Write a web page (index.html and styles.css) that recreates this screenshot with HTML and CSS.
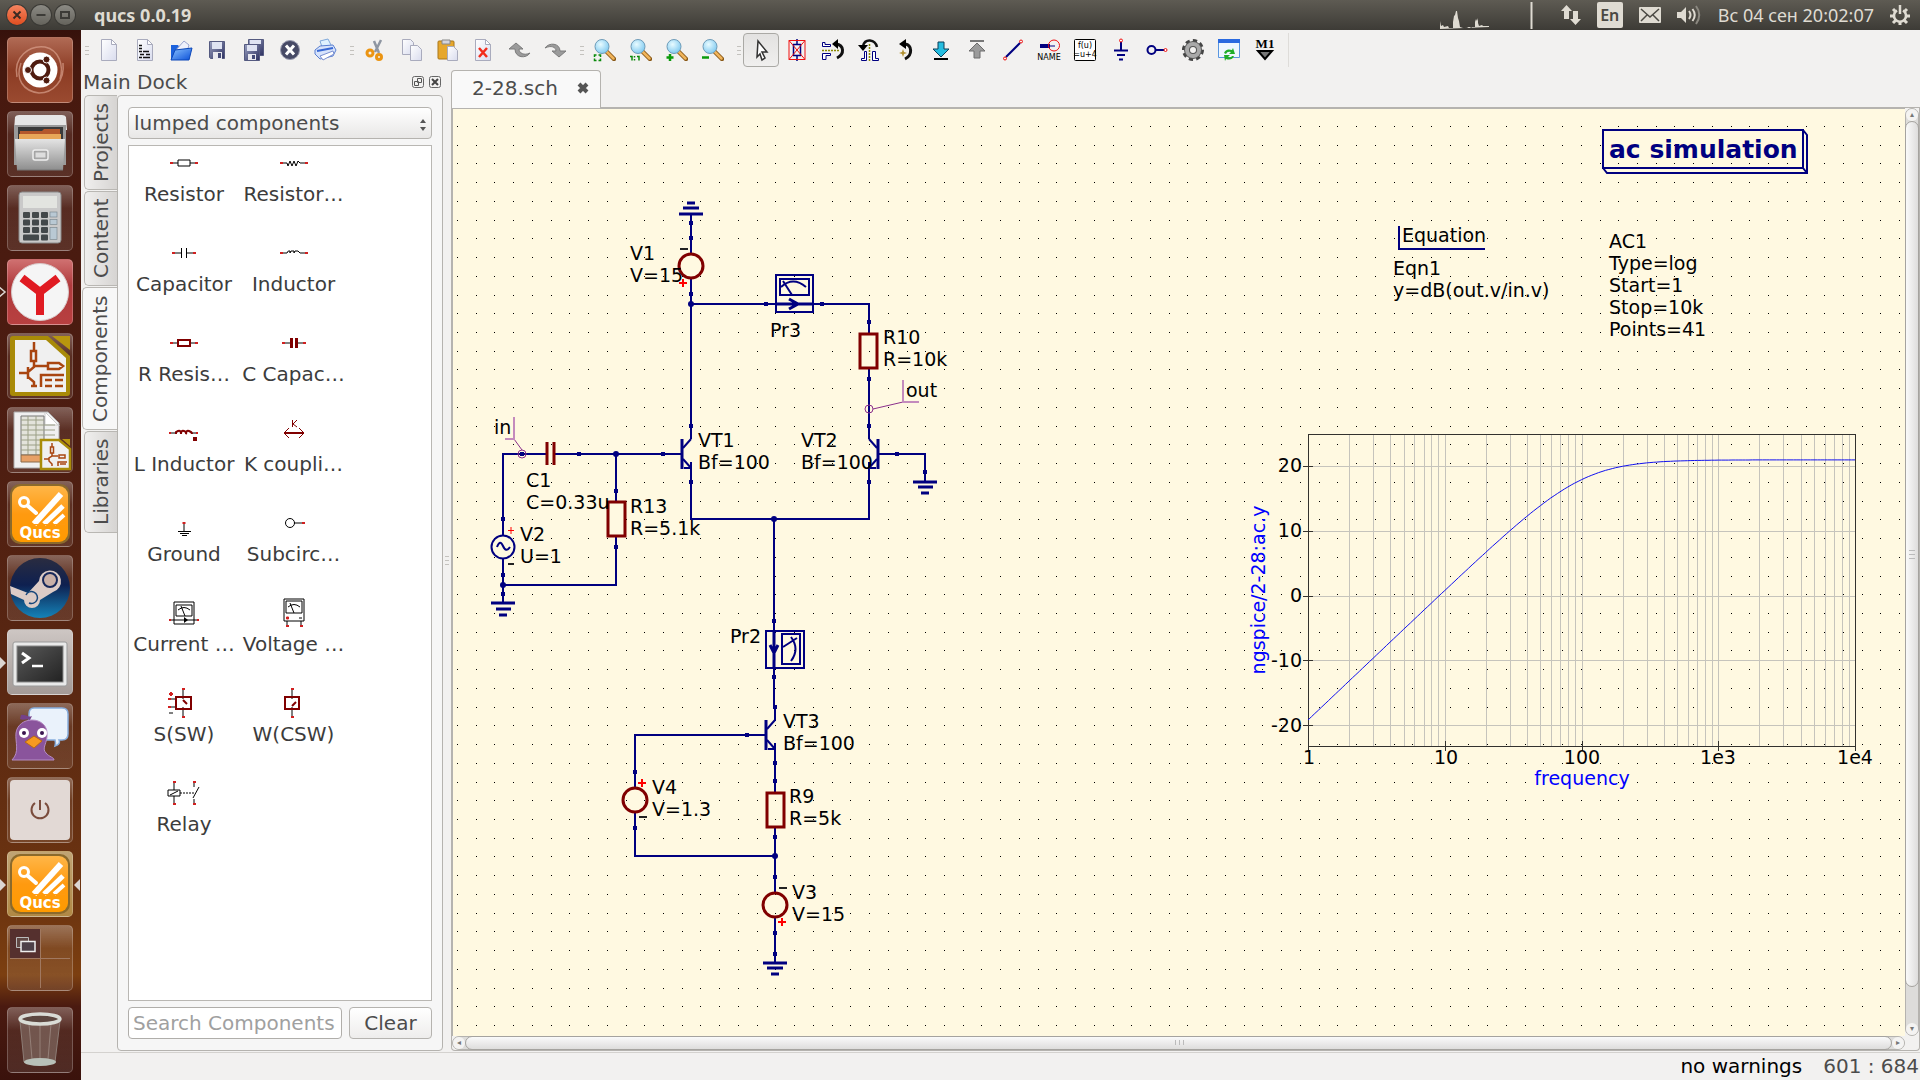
FILE: index.html
```html
<!DOCTYPE html>
<html lang="en">
<head>
<meta charset="utf-8">
<title>qucs 0.0.19</title>
<link rel="stylesheet" href="styles.css">
</head>
<body>
<svg class="defs" aria-hidden="true">
  <defs>
    <linearGradient id="gPaper" x1="0" y1="0" x2="1" y2="1"><stop offset="0" stop-color="#fff"/><stop offset="1" stop-color="#d9dcee"/></linearGradient>
    <linearGradient id="gNavy" x1="0" y1="0" x2="1" y2="1"><stop offset="0" stop-color="#9aa0c0"/><stop offset="1" stop-color="#2c3060"/></linearGradient>
    <linearGradient id="gBlue" x1="0" y1="0" x2="1" y2="1"><stop offset="0" stop-color="#8cc4ff"/><stop offset="1" stop-color="#0a4fd8"/></linearGradient>
    <linearGradient id="gGrey" x1="0" y1="0" x2="0" y2="1"><stop offset="0" stop-color="#e4e4e4"/><stop offset="1" stop-color="#8e8e8e"/></linearGradient>
    <linearGradient id="gDark" x1="0" y1="0" x2="1" y2="1"><stop offset="0" stop-color="#5a5a5a"/><stop offset="1" stop-color="#222"/></linearGradient>
    <linearGradient id="gSteam" x1="0" y1="0" x2="0" y2="1"><stop offset="0" stop-color="#2a2c40"/><stop offset=".45" stop-color="#0e2050"/><stop offset="1" stop-color="#1583b8"/></linearGradient>
    <linearGradient id="gOrange" x1="0" y1="0" x2="0" y2="1"><stop offset="0" stop-color="#ffb648"/><stop offset=".5" stop-color="#ff9a10"/><stop offset="1" stop-color="#ff9a00"/></linearGradient>
    <radialGradient id="gLens" cx=".4" cy=".35" r=".7"><stop offset="0" stop-color="#e8fbff"/><stop offset="1" stop-color="#7cc8f0"/></radialGradient>
    <symbol id="sheet" viewBox="0 0 22 22"><path d="M3.500.5h10l5 5v16h-15z" fill="url(#gPaper)" stroke="#a9abbd"/><path d="M13.500.5v5h5z" fill="#fff" stroke="#a9abbd"/></symbol>
    <symbol id="lens" viewBox="0 0 22 22"><path d="M12 12l8 8" stroke="#8a5a18" stroke-width="4.500" stroke-linecap="round"/><path d="M12.500 12.500l7 7" stroke="#f0b45a" stroke-width="2.500" stroke-linecap="round"/><circle cx="8" cy="7.500" r="7" fill="url(#gLens)" stroke="#6f9cb8"/></symbol>
    <symbol id="qucsLogo" viewBox="0 0 66 66">
      <rect x="3" y="3" width="60" height="60" rx="10" fill="#8b6a2c"/>
      <rect x="5" y="5" width="56" height="56" rx="9" fill="url(#gOrange)"/>
      <g stroke="#fff" fill="none"><circle cx="17" cy="21" r="4.500" stroke-width="3"/><path d="M21 25l8 7" stroke-width="4" stroke-linecap="round"/><path d="M27 43L54 13" stroke-width="6"/><path d="M37 43L56 25" stroke-width="5"/><path d="M47 43l10-9" stroke-width="4"/></g>
      <path d="M24 43.500h34" stroke="#ff9a10" stroke-width="1"/>
      <text x="33" y="57" text-anchor="middle" class="qucs-word">Qucs</text>
    </symbol>
    <symbol id="npn" overflow="visible"><path d="M-9 -15v30" stroke-width="3"/><path d="M-8 -6l8 -9M-8 5l8 9M0 8v6h-7" /></symbol>
  </defs>
</svg>

<header class="panel">
  <div class="window-buttons">
    <button class="wb wb-close" aria-label="Close"><svg viewBox="0 0 20 20"><path d="M6.500 6.500l7 7M13.500 6.500l-7 7" stroke="#3c2a22" stroke-width="2"/></svg></button>
    <button class="wb" aria-label="Minimize"><svg viewBox="0 0 20 20"><path d="M5.500 10h9" stroke="#3c3b37" stroke-width="2"/></svg></button>
    <button class="wb" aria-label="Maximize"><svg viewBox="0 0 20 20"><path d="M6 7h8v6H6z" stroke="#3c3b37" stroke-width="2" fill="none"/></svg></button>
  </div>
  <h1 class="panel-title">qucs 0.0.19</h1>
  <div class="indicators">
    <svg class="cpu" viewBox="0 0 94 30"><path d="M1 29V21l1 5 2-1 1 2 4-1 1 2h4v-6l1-6 1-1 1-4h1l1 7 1 3 1 6 3 1h4l2-1 2 1 1-1h3v-5l1-3 1 2 1-3v5l1 3 3-1 1 1h6v1z" fill="#dfdbd2"/><path d="M92.500 2v27" stroke="#dfdbd2" stroke-width="2"/></svg>
    <svg class="ind-20" viewBox="0 0 20 20"><path d="M5.500 0L11 6H8v8H3V6H0zM14.500 20L9 14h3V6h5v8h3z" fill="#dfdbd2"/></svg>
    <span class="lang">En</span>
    <svg class="ind-mail" viewBox="0 0 22 16"><rect width="22" height="16" rx="1" fill="#dfdbd2"/><path d="M2 2l9 8 9-8M2 14l6-6M20 14l-6-6" fill="none" stroke="#4a4842" stroke-width="1.500"/></svg>
    <svg class="ind-vol" viewBox="0 0 25 20"><path d="M0 7h4l5-5v16l-5-5H0z" fill="#dfdbd2"/><path d="M12 6q3 4 0 8M15.500 4q4.500 6 0 12" fill="none" stroke="#dfdbd2" stroke-width="2"/><path d="M19 1q6.500 9 0 18" fill="none" stroke="#8b8880" stroke-width="2"/></svg>
    <time class="clock">Вс 04 сен 20:02:07</time>
    <svg class="ind-20" viewBox="0 0 20 20"><g stroke="#dfdbd2" fill="none"><path d="M7 5.500a6 6 0 1 0 6 0" stroke-width="2.500"/><path d="M10 0v9" stroke-width="2.500"/><path d="M0 11h4M16 11h4M3 4l3 3M17 4l-3 3M3 18l3-3M17 18l-3-3M10 17v3" stroke-width="3"/></g></svg>
  </div>
</header>

<div class="desktop">
  <nav class="launcher" aria-label="Launcher">
    <button class="tile tile-dash" aria-label="Dash"><svg viewBox="0 0 66 66"><path d="M10 40C6 20 22 8 38 10c14 3 19 18 15 32M56 26c2 18-10 30-24 30C16 54 8 42 14 26" fill="none" stroke="#d9a08c" stroke-opacity=".7" stroke-width="1.500"/><circle cx="33" cy="33" r="17.500" fill="#fff"/><circle cx="33" cy="33" r="8.500" fill="none" stroke="#4f1c10" stroke-width="4"/><g fill="#4f1c10" stroke="#fff"><circle cx="21" cy="33" r="3.500"/><circle cx="39.500" cy="22.500" r="3.500"/><circle cx="39.500" cy="43.500" r="3.500"/></g></svg></button>
    <button class="tile" aria-label="Files"><svg viewBox="0 0 66 66"><path d="M8 6q1-2 4-2h43q3 0 4 2l1 13H7z" fill="#e6e6e6"/><path d="M7 14h52v40H7z" fill="#9a9a9a"/><path d="M11 16h45v13H11z" fill="#3a3a3a"/><path d="M13 20h22l2-2h16v9H13z" fill="#b4582c"/><path d="M12 23h42v5H12z" fill="#e8a658"/><path d="M8 28h50l-2 31H10z" fill="url(#gGrey)"/><path d="M10 59h46" stroke="#777"/><rect x="26" y="39" width="15" height="10" rx="2" fill="#a5a5a5" stroke="#eee" stroke-width="1.500"/><rect x="28.500" y="41.500" width="10" height="5" fill="#ddd"/></svg></button>
    <button class="tile" aria-label="Calculator"><svg viewBox="0 0 66 66"><rect x="12" y="7" width="42" height="51" rx="3" fill="#c9c9c9" stroke="#8a8a8a"/><rect x="16" y="11" width="34" height="12" fill="#e2e4e0"/><g fill="#43484a"><rect x="16" y="27" width="7" height="6" rx="1"/><rect x="25" y="27" width="7" height="6" rx="1"/><rect x="34" y="27" width="7" height="6" rx="1"/><rect x="16" y="34.500" width="7" height="6" rx="1"/><rect x="25" y="34.500" width="7" height="6" rx="1"/><rect x="34" y="34.500" width="7" height="6" rx="1"/><rect x="16" y="42" width="7" height="6" rx="1"/><rect x="25" y="42" width="7" height="6" rx="1"/><rect x="34" y="42" width="7" height="6" rx="1"/><rect x="16" y="49.500" width="16" height="6" rx="1"/><rect x="34" y="49.500" width="7" height="6" rx="1"/></g><g fill="#b9c9d4" stroke="#7e8a92" stroke-width=".7"><rect x="43" y="27" width="7" height="5"/><rect x="43" y="34.500" width="7" height="5"/><rect x="43" y="42.500" width="7" height="12"/></g></svg></button>
    <button class="tile tile-yandex" aria-label="Yandex Browser"><svg viewBox="0 0 66 66"><circle cx="33" cy="33" r="28.500" fill="#f5f5f5" stroke="#d8c8c8"/><path d="M15 19l18 14 18-14" fill="none" stroke="#e01b22" stroke-width="8"/><path d="M33 31v25" stroke="#e01b22" stroke-width="8"/><path d="M-8 28l6 5-6 5" fill="none" stroke="#dcd6d2" stroke-width="1.500"/></svg></button>
    <button class="tile" aria-label="Schematic editor"><svg viewBox="0 0 66 66"><path d="M3 6q0-3 3-3h35l22 20v37q0 3-3 3H6q-3 0-3-3z" fill="#a88a08"/><path d="M45 3h18v14z" fill="#b8960e"/><path d="M8 7h31l20 18v34H8z" fill="#f0f0f0"/><g stroke="#a94510" fill="none" stroke-width="2.500"><path d="M27 9v9M27 28v6l-6 5v5l6 5v3M12 40h9M21 34v12M27 33h14M24 53h6"/><path d="M24 18h5v10h-5z"/><path d="M41 30h11l4 3-4 3H41z"/><path d="M34 54V42h23M38 47h7M48 47h8M38 53h7M48 53h8"/></g></svg></button>
    <button class="tile" aria-label="Bill of materials"><svg viewBox="0 0 66 66"><path d="M7 5h34l11 11v45H7z" fill="#f0f0f0" stroke="#aaa"/><path d="M38 5l14 14V18H38z" fill="#fff" stroke="#ccc"/><path d="M14 9h23v39H14z" fill="#e3e3db" stroke="#777"/><path d="M14 13h23M14 18h34M14 23h34M14 28h34M14 33h34M14 38h34M14 43h34M21 9v39M29 9v39" stroke="#9b9f86"/><path d="M14 48h20v7H14z" fill="#e7a066" stroke="#8a6a4a"/><path d="M34 33h18l11 9v20H34z" fill="#f0f0f0" stroke="#a98c08" stroke-width="2.500"/><path d="M55 32h8v7z" fill="#b8960e"/><g stroke="#a94510" fill="none" stroke-width="1.500"><path d="M45 36v4M45 46v3l-3 2v3l3 3v2M37 52h5M45 49h6M52 48h6v3h-6zM51 59v-4h9M53 57h6M43.500 40h3v6h-3z"/></g></svg></button>
    <button class="tile" aria-label="Qucs"><svg viewBox="0 0 66 66"><use href="#qucsLogo"/></svg></button>
    <button class="tile" aria-label="Steam"><svg viewBox="0 0 66 66"><circle cx="33" cy="33" r="30" fill="url(#gSteam)"/><path d="M3 31l18 7 11-12a11 11 0 1 1 14 11L33 45a8 8 0 0 1-16 0L4 39z" fill="#dccbc6"/><circle cx="43" cy="25" r="7" fill="#c9b0a8" stroke="#17285a" stroke-width="2"/><path d="M19 40a6 6 0 1 1 3 8" fill="none" stroke="#17457a" stroke-width="1.500"/></svg></button>
    <button class="tile tile-light running" aria-label="Terminal"><svg viewBox="0 0 66 66"><rect x="6" y="13" width="54" height="44" rx="2" fill="#e9e9e9" stroke="#999"/><rect x="10" y="17" width="46" height="36" fill="url(#gDark)" stroke="#888"/><path d="M15 24l7 5-7 5" fill="none" stroke="#fff" stroke-width="3"/><path d="M25 37h11" stroke="#fff" stroke-width="2.500"/></svg></button>
    <button class="tile" aria-label="Pidgin"><svg viewBox="0 0 66 66"><path d="M27 5h28q6 0 6 6v20q0 6-6 6h-3q2 4-4 6 1-3 0-6H28q-6 0-6-6V11q0-6 5-6z" fill="#eaf2fb" stroke="#88aede" stroke-width="1.500"/><path d="M5 57c8-8 3-18 4-27 1-8 8-13 16-13 9 0 15 6 15 13 1 10-6 15-1 20 3 4 8 4 8 7z" fill="#8a549c" stroke="#b58cc4"/><path d="M13 16c4 2 6-1 10 1l2-4c-4 2-7-2-11-1z" fill="#75428a"/><circle cx="17" cy="30" r="5" fill="#fff"/><circle cx="35" cy="30" r="5" fill="#fff"/><circle cx="17" cy="30" r="2" fill="#3a1650"/><circle cx="35" cy="30" r="2" fill="#3a1650"/><path d="M18 39l9-6 8 5-8 7z" fill="#f79a20" stroke="#b96a10"/></svg></button>
    <button class="tile" aria-label="Session"><svg viewBox="0 0 66 66"><rect x="3" y="3" width="60" height="60" rx="4" fill="#e2d9d5"/><path d="M28 26a8.500 8.500 0 1 0 10 0M33 23v10" fill="none" stroke="#7a4c3c" stroke-width="2"/></svg></button>
    <button class="tile tile-tan running active" aria-label="Qucs window"><svg viewBox="0 0 66 66"><use href="#qucsLogo"/></svg></button>
    <button class="tile" aria-label="Workspaces"><svg viewBox="0 0 66 66"><path d="M3 4h30v29H3z" fill="#55302e"/><path d="M33.500 4v59M3 33.500h60" stroke="#a07860"/><path d="M9.500 12.500h12v10h-12z" fill="#604844" stroke="#bbb"/><path d="M14 16.500h14v10H14z" fill="#4d4048" stroke="#eee" stroke-width="1.500"/></svg></button>
    <button class="tile tile-trash" aria-label="Trash"><svg viewBox="0 0 66 66"><path d="M13 14h40l-5 41q-15 6-31 0z" fill="#8d7a72" fill-opacity=".55" stroke="#8d7d76"/><path d="M22 17l3 35M33 18v36M44 17l-3 35" stroke="#c9bdb6" stroke-opacity=".4"/><ellipse cx="33" cy="55" rx="16" ry="4" fill="#b8c0b8"/><ellipse cx="33" cy="12" rx="20" ry="5" fill="#5c4740" stroke="#d9dcd6" stroke-width="3.500"/></svg></button>
  </nav>

  <main class="window">
    <div class="toolbar" role="toolbar" aria-label="Main toolbar">
      <span class="grip"></span>
      <button class="tb" aria-label="New"><svg viewBox="0 0 22 22"><use href="#sheet"/></svg></button>
      <button class="tb" aria-label="New text"><svg viewBox="0 0 22 22"><use href="#sheet"/><path d="M5 6.500h3M5 9.500h3M5 12.500h3M9 12.500h6M6 15.500h4M12 15.500h4M5 18.500h3M9 18.500h7" stroke="#111" stroke-width="1.500"/></svg></button>
      <button class="tb" aria-label="Open"><svg viewBox="0 0 22 22"><path d="M1 6h7l2 3h9v12H1z" fill="#1d62dc"/><path d="M5 12l9-10 5 4-3 10z" fill="#eef0fb" stroke="#9aa4cf"/><path d="M1 21l4-10 17-2-3 12z" fill="url(#gBlue)" stroke="#0a46b8"/></svg></button>
      <button class="tb" aria-label="Save"><svg viewBox="0 0 22 22"><path d="M3.500 2.500h15v17h-14l-1-1z" fill="url(#gNavy)" stroke="#555a80"/><path d="M6 3h10v7H6z" fill="#dfe3f2"/><path d="M7 13h9v7H7z" fill="#e8e8ee"/><path d="M12 14h3v5h-3z" fill="#444a78"/></svg></button>
      <button class="tb" aria-label="Save all"><svg viewBox="0 0 22 22"><path d="M6.500.5h15v16h-15z" fill="url(#gNavy)" stroke="#555a80"/><path d="M8 1h11v4H8z" fill="#dfe3f2"/><path d="M2.500 5.500h15v16h-15z" fill="url(#gNavy)" stroke="#555a80"/><path d="M5 6h10v6H5z" fill="#dfe3f2"/><path d="M6 15h8v6H6z" fill="#e8e8ee"/><path d="M10 16h3v4h-3z" fill="#444a78"/></svg></button>
      <button class="tb" aria-label="Close document"><svg viewBox="0 0 22 22"><circle cx="12" cy="11" r="9.500" fill="#474a66" stroke="#9a9cb0"/><path d="M8 6.500l8 9M16 6.500l-8 9" stroke="#fff" stroke-width="3"/></svg></button>
      <button class="tb" aria-label="Print"><svg viewBox="0 0 22 22"><path d="M6 2l8-2 4 8-9 3z" fill="#dff2ff" stroke="#7fa8da"/><path d="M1 11l5-4 13-1 3 5-3 6-13 3-5-5z" fill="#d7e3fb" stroke="#5a7fd0"/><path d="M3 12l16-3" stroke="#3768d4" stroke-width="2"/><path d="M6 17l13-5 1 3-11 6z" fill="#fff" stroke="#7a8fd0"/></svg></button>
      <span class="grip"></span>
      <button class="tb" aria-label="Cut"><svg viewBox="0 0 22 22"><path d="M17 1l-6 12M10 2l5 12" stroke="#8f96a2" stroke-width="2.500"/><g fill="none" stroke="#eb9412" stroke-width="3"><circle cx="6" cy="14" r="3"/><circle cx="15" cy="18" r="2.500"/></g></svg></button>
      <button class="tb" aria-label="Copy"><svg viewBox="0 0 22 22"><path d="M2.500.5h8l3 3v12h-11z" fill="url(#gPaper)" stroke="#a9abbd"/><path d="M10.500 6.500h7l4 4v11h-11z" fill="url(#gPaper)" stroke="#a9abbd"/></svg></button>
      <button class="tb" aria-label="Paste"><svg viewBox="0 0 22 22"><rect x="2" y="2" width="16" height="18" rx="1" fill="#e6a72c" stroke="#a9761a"/><path d="M6 1h8v4H6z" fill="#d4d4dc" stroke="#888"/><path d="M11.500 7.500h6l4 4v10h-10z" fill="url(#gPaper)" stroke="#a9abbd"/></svg></button>
      <button class="tb" aria-label="Delete"><svg viewBox="0 0 22 22"><use href="#sheet"/><path d="M7 9l8 9M15 9l-8 9" stroke="#f22c1c" stroke-width="2.500"/></svg></button>
      <button class="tb" aria-label="Undo"><svg viewBox="0 0 22 22"><path d="M8 4l7 6h-4c0 4 5 7 11 4-4 6-15 5-15-4H1z" fill="#9b9b9b" stroke="#7c7c7c"/></svg></button>
      <button class="tb" aria-label="Redo"><svg viewBox="0 0 22 22"><path d="M15 18l-7-6h4c0-4-5-6-11-3 4-6 15-5 15 3h6z" fill="#9b9b9b" stroke="#7c7c7c"/></svg></button>
      <span class="grip"></span>
      <button class="tb" aria-label="Zoom to fit"><svg viewBox="0 0 22 22"><use href="#lens"/><path d="M.5 18v-2h2M4.500 16h2v2M.500 19.500v2h2M4.500 21.500h2v-2" fill="none" stroke="#0a8a0a" stroke-width="1.500"/></svg></button>
      <button class="tb" aria-label="Zoom 1:1"><svg viewBox="0 0 22 22"><use href="#lens"/><path d="M0 17.500h2v4M7 17.500h2v4M4.500 17v1.500M4.500 20v1.500" fill="none" stroke="#0a8a0a" stroke-width="1.500"/></svg></button>
      <button class="tb" aria-label="Zoom in"><svg viewBox="0 0 22 22"><use href="#lens"/><path d="M4 15v7M.500 18.500h7" stroke="#0a9a0a" stroke-width="2.500"/></svg></button>
      <button class="tb" aria-label="Zoom out"><svg viewBox="0 0 22 22"><use href="#lens"/><path d="M0 18.500h7" stroke="#0a9a0a" stroke-width="2.500"/></svg></button>
      <span class="grip grip-narrow"></span>
      <button class="tb tb-on" aria-label="Select"><svg viewBox="0 0 22 22"><path d="M8 2l9 11h-5l3 6-3 2-2-6-3 3z" fill="#fff" stroke="#333" stroke-width="1.500"/></svg></button>
      <button class="tb" aria-label="Deactivate"><svg viewBox="0 0 22 22"><path d="M11 0v5M11 17v5M7.500 5.500h7v11h-7z" fill="none" stroke="#000080" stroke-width="1.500"/><path d="M3 1.500h16v19H3zM3 1.500l16 19M19 1.500l-16 19" fill="none" stroke="#f01010"/></svg></button>
      <button class="tb" aria-label="Mirror about X"><svg viewBox="0 0 22 22"><path d="M.5 3.500v4h8v-2H3v-2zM.500 20.500v-6h8v2H4v4z" fill="#fff" stroke="#000080"/><path d="M0 11.500h17" stroke="#8a8a00" stroke-width="1.500" stroke-dasharray="2 1"/><path d="M15 19c8-4 7-13-1-14" fill="none" stroke="#111" stroke-width="3"/><path d="M10 5l6-5v10z"/></svg></button>
      <button class="tb" aria-label="Mirror about Y"><svg viewBox="0 0 22 22"><path d="M3.500 21.500v-2h3v-7h2v9zM20.500 21.500v-2h-3v-7h-3v9z" fill="#fff" stroke="#000080"/><path d="M11.500 5v17" stroke="#8a8a00" stroke-width="1.500" stroke-dasharray="2 1"/><path d="M19 8C17 0 7-1 5 7" fill="none" stroke="#111" stroke-width="2.500"/><path d="M0 6h10l-5 6z"/></svg></button>
      <button class="tb" aria-label="Rotate"><svg viewBox="0 0 22 22"><path d="M11 20c8-4 7-14 0-15" fill="none" stroke="#111" stroke-width="3"/><path d="M5 5l7-5v10z"/><path d="M9 10l1 3 3 1-3 1-1 3-1-3-3-1 3-1z" fill="#b09030"/></svg></button>
      <button class="tb" aria-label="Go into subcircuit"><svg viewBox="0 0 22 22"><path d="M8 3h6v7h5l-8 8-8-8h5z" fill="#25bde0" stroke="#0a3f58"/><path d="M4 20h14" stroke="#000" stroke-width="2"/></svg></button>
      <button class="tb" aria-label="Pop out"><svg viewBox="0 0 22 22"><path d="M8 19h6v-7h5l-8-8-8 8h5z" fill="#9b9b9b" stroke="#6c6c6c"/><path d="M4 2h14" stroke="#777" stroke-width="2"/></svg></button>
      <button class="tb" aria-label="Wire"><svg viewBox="0 0 22 22"><path d="M4 18L18 4" stroke="#000080" stroke-width="2"/><circle cx="3" cy="19.500" r="1.500" fill="none" stroke="#f01010"/><circle cx="19" cy="2.500" r="1.500" fill="none" stroke="#f01010"/></svg></button>
      <button class="tb" aria-label="Wire label"><svg viewBox="0 0 22 22"><path d="M2 7h10" stroke="#000080" stroke-width="4"/><path d="M10 7h7" stroke="#000080"/><circle cx="16" cy="6.500" r="5.500" fill="none" stroke="#f01010"/><text x="11" y="21" class="icon-name" text-anchor="middle">NAME</text></svg></button>
      <button class="tb" aria-label="Insert equation"><svg viewBox="0 0 22 22"><rect x=".5" y=".5" width="21" height="21" rx="1" fill="#fff" stroke="#000"/><text x="11" y="9" class="icon-name" text-anchor="middle">f(u)</text><text x="11" y="18" class="icon-name" text-anchor="middle">=u+4</text></svg></button>
      <button class="tb" aria-label="Ground"><svg viewBox="0 0 22 22"><path d="M11 3v8M4 11.500h14M7 16h8M9 20.500h4" stroke="#000080" stroke-width="2"/><circle cx="11" cy="1.500" r="1.500" fill="#fff" stroke="#f01010"/></svg></button>
      <button class="tb" aria-label="Port"><svg viewBox="0 0 22 22"><circle cx="5.500" cy="11" r="4" fill="none" stroke="#000080" stroke-width="2"/><path d="M10 11h8" stroke="#000080" stroke-width="2"/><circle cx="19.500" cy="11" r="1.500" fill="#fff" stroke="#f01010"/></svg></button>
      <button class="tb" aria-label="Simulate"><svg viewBox="0 0 22 22"><circle cx="11" cy="11" r="9" fill="none" stroke="#444" stroke-width="4" stroke-dasharray="4 3"/><circle cx="11" cy="11" r="6" fill="none" stroke="#555" stroke-width="6"/><circle cx="11" cy="11" r="6" fill="none" stroke="#a9a9a9" stroke-width="4"/></svg></button>
      <button class="tb" aria-label="View data display"><svg viewBox="0 0 22 22"><path d="M.5.5h21v18H.500z" fill="#eef7ff" stroke="#5a96e0"/><path d="M0 0h22v4H0z" fill="#2a6ae0"/><path d="M6 14q2-5 8-3l1-2 2 6h-6l2-2q-4-1-5 2zM16 17q-2 5-8 3l-1 2-1-6h6l-2 2q3 1 4-1z" fill="#1fae2a"/></svg></button>
      <button class="tb" aria-label="Set marker"><svg viewBox="0 0 22 22"><text x="11" y="9" class="icon-m1" text-anchor="middle">M1</text><path d="M4 12h14l-7 8z" fill="#777" stroke="#000" stroke-width="2"/></svg></button>
      <span class="tb-end"></span>
    </div>

    <div class="work">
      <aside class="dock">
        <div class="dock-title">
          <h2>Main Dock</h2>
          <button class="dock-btn" aria-label="Float"><svg viewBox="0 0 12 12"><rect x=".5" y=".5" width="11" height="11" rx="2" fill="none" stroke="#666"/><path d="M5.500 2.500h4v4h-4zM2.500 5.500h4v4h-4z" fill="none" stroke="#555"/></svg></button>
          <button class="dock-btn" aria-label="Close dock"><svg viewBox="0 0 12 12"><rect x=".5" y=".5" width="11" height="11" rx="2" fill="none" stroke="#666"/><path d="M3 3l6 6M9 3l-6 6" stroke="#444" stroke-width="2"/></svg></button>
        </div>
        <div class="dock-body">
          <div class="side-tabs" role="tablist" aria-label="Dock pages">
            <button class="side-tab t-projects" role="tab">Projects</button>
            <button class="side-tab t-content" role="tab">Content</button>
            <button class="side-tab t-components selected" role="tab" aria-selected="true">Components</button>
            <button class="side-tab t-libraries" role="tab">Libraries</button>
          </div>
          <div class="dock-page">
            <div class="combo">
              <select aria-label="Component group"><option>lumped components</option></select>
              <svg class="combo-arrows" viewBox="0 0 6 12"><path d="M0 4l3-4 3 4zM0 8h6l-3 4z" fill="#555"/></svg>
            </div>
            <ul class="parts">
              <li><svg viewBox="0 0 32 32"><path d="M4 16h6M22 16h5" class="k"/><path d="M10 13h12v6H10z" class="k"/><path d="M2 16h3M27 16h3" class="pin"/></svg>Resistor</li>
              <li><svg viewBox="0 0 32 32"><path d="M4 16h5l1 3 2-5 2 5 2-5 2 5 2-5 2 2h5" class="k"/><path d="M2 16h3M27 16h3" class="pin"/></svg>Resistor…</li>
              <li><svg viewBox="0 0 32 32"><path d="M6 16h7M19 16h7M13.500 11v10M18.500 11v10" class="k"/><path d="M4 16h3M25 16h3" class="pin"/></svg>Capacitor</li>
              <li><svg viewBox="0 0 32 32"><path d="M4 16h5q1-3 3-2v2q0-3 4-2v2q0-3 4-2l2 2h6" class="k"/><path d="M2 16h3M27 16h3" class="pin"/></svg>Inductor</li>
              <li><svg viewBox="0 0 32 32"><path d="M4 16h6M22 16h5" class="k"/><path d="M10 13h12v6H10z" class="r2"/><path d="M2 16h3M27 16h3" class="pin"/></svg>R Resis…</li>
              <li><svg viewBox="0 0 32 32"><path d="M6 16h7M19 16h7" class="k"/><path d="M13.500 11v10M18.500 11v10" class="r3"/><path d="M4 16h3M25 16h3" class="pin"/></svg>C Capac…</li>
              <li><svg viewBox="0 0 32 32"><path d="M2 16h6M24 16h6" class="k"/><path d="M8 17v-2l2-1q3-1 3 3q0-4 3-3t2 3q0-4 3-3t3 3" class="r2"/><path d="M25 20h4v4h-4z" fill="#800000"/><path d="M1 16h2M28 16h2" class="pin"/></svg>L Inductor</li>
              <li><svg viewBox="0 0 32 32"><path d="M7 16h18" class="r2"/><path d="M11 11l-5 5 5 5M21 11l5 5-5 5M14.500 3v7M19 3l-4 4 4 3" class="r1"/></svg>K coupli…</li>
              <li><svg viewBox="0 0 32 32"><path d="M16 16v8M10 24.500h13M12 26.500h9M14 28.500h5" class="k"/><path d="M14.500 16h3" class="pin"/></svg>Ground</li>
              <li><svg viewBox="0 0 32 32"><circle cx="12" cy="16" r="4.500" class="k"/><path d="M16 16h8" class="k"/><path d="M24 16h3" class="pin"/></svg>Subcirc…</li>
              <li><svg viewBox="0 0 32 32"><path d="M6 5h20v22H6zM8 8h16v11H8zM10 13q6-5 12 0M13 9l4 10M2 23h28" class="k"/><path d="M16 20l4 3-4 3z" fill="#000"/><path d="M1 23h2M29 23h2" class="pin"/></svg>Current …</li>
              <li><svg viewBox="0 0 32 32"><path d="M6 2h20v22H6zM8 4h16v12H8zM10 10q6-5 12 0M12 6l4 10M9 24v5M23 24v5M21 21h3" class="k"/><path d="M8 21h3M9.500 19.500v3M8 29h3M22 29h3" class="pin"/></svg>Voltage …</li>
              <li><svg viewBox="0 0 32 32"><path d="M15 2v10M15 20v10M2 12h6M2 20h6M1 26h4" class="k"/><path d="M8 10h15v12H8zM15 13l4 4" class="r2"/><path d="M1 7h4M3 5v4M14 2h3M14 30h3M0 12h3M0 20h3" class="pin"/></svg>S(SW)</li>
              <li><svg viewBox="0 0 32 32"><path d="M14 2v10M14 20v10" class="k"/><path d="M7 10h14v12H7zM14 19l4-4" class="r2"/><path d="M13 2h3M13 30h3" class="pin"/></svg>W(CSW)</li>
              <li><svg viewBox="0 0 32 32"><path d="M6 5v8M6 19v8M0 13h12v6H0zM2 18l8-4M26 5v5M26 22v5M25 21l6-11" class="k"/><path d="M12 16h15" class="k" stroke-dasharray="2 1"/><path d="M5 5h3M5 27h3M25 5h3M25 27h3" class="pin"/></svg>Relay</li>
            </ul>
            <div class="search-row">
              <input type="text" placeholder="Search Components" aria-label="Search Components">
              <button class="clear">Clear</button>
            </div>
          </div>
        </div>
      </aside>
      <div class="splitter"><span></span></div>

      <section class="editor">
        <div class="doc-tabs"><div class="doc-tab"><a href="#schematic">2-28.sch</a><button aria-label="Close tab"><svg viewBox="0 0 12 12"><path d="M2 2l8 8M10 2l-8 8" stroke="#555" stroke-width="4"/></svg></button></div><div class="doc-rest"></div></div>
        <div class="pane">
          <svg class="canvas" id="schematic" role="img" aria-label="Schematic 2-28.sch">
            <path id="dots"/>
            <!-- drawing coordinates start at the sheet's scroll origin 453,109 -->
            <g transform="translate(-453 -109)">
              <g class="wire">
                <path d="M691 213v42M691 278v161M691 304h178v29M869 368v71M691 467v52h178v-52M774 519v188M775 706v15"/>
                <path d="M503 536v-82h44M554 454h127M616 454v48M616 537v48H503M503 558v45M879 454h46v28"/>
                <path d="M766 735H635v54M635 811v45h140M775 748v44M775 827v66M775 916v47"/>
                <use href="#npn" x="691" y="454"/><use href="#npn" transform="translate(869 454) scale(-1 1)"/><use href="#npn" x="775" y="735"/>
              </g>
              <g class="bars"><path d="M679 214h24M683 208h16M687 203h8"/><path d="M491 603h24M496 609h15M499 615h8M913 482h24M918 487h15M921 493h8M763 963h24M767 968h16M771 974h8"/></g>
              <g class="red-part"><circle cx="691" cy="266" r="12"/><circle cx="635" cy="800" r="12"/><circle cx="775" cy="905" r="12"/><path d="M860 334h17v34h-17zM608 502h17v34h-17zM767 793h17v34h-17z"/><path d="M547 442v23M554 442v23"/></g>
              <g class="wire meter"><path d="M776 275h37v37h-37zM780 279h29v16h-29zM781 287q12-11 25 0M783 281l9 14"/><path d="M776 304h37M789 299l9 5-9 5" class="fat"/><path d="M766 631h38v37h-38zM782 634h18v30h-18zM791 637q9 12 0 24M783 647l14-9"/><path d="M774 631v37M770 645l4 8 4-8" class="fat"/><circle cx="503" cy="547" r="11.500"/><path d="M497 547q3-8 6-1t7 1"/></g>
              <path class="plus-minus" d="M680 249h8M508 564h6M639 817h8M779 888h8"/>
              <path class="plus" d="M679 283h8M683 279v8M638 783h8M642 779v8M778 922h8M782 918v8"/>
              <path class="plus thin" d="M508 530.500h6M511 527v7"/>
              <path class="pins" d="M689 223h4M689 238h4M689 294h4M689 426h4M764 304h4M820 304h4M867 322h4M867 379h4M867 426h4M689 482h4M867 482h4M577 454h4M661 454h4M520 454h4M501 519h4M501 575h4M501 594h4M614 491h4M614 547h4M895 454h4M923 472h4M772 621h4M772 677h4M773 707h4M745 735h4M773 763h4M773 781h4M773 837h4M773 877h4M773 933h4M773 954h4M633 772h4M633 828h4"/>
              <g class="joint"><circle cx="691" cy="304" r="3"/><circle cx="616" cy="454" r="3"/><circle cx="503" cy="585" r="3"/><circle cx="774" cy="519" r="3"/><circle cx="775" cy="856" r="3"/></g>
              <g class="probe"><circle cx="869" cy="409" r="4"/><circle cx="522" cy="454" r="4"/><path d="M873 409l30-7M522 450l-8-11"/><path d="M903 380v22h16M514 417v22h-9" class="flag"/></g>
              <g class="label">
                <text x="630" y="260">V1</text><text x="630" y="282">V=15</text>
                <text x="770" y="337">Pr3</text>
                <text x="883" y="344">R10</text><text x="883" y="366">R=10k</text>
                <text x="906" y="397">out</text><text x="494" y="434">in</text>
                <text x="698" y="447">VT1</text><text x="698" y="469">Bf=100</text>
                <text x="801" y="447">VT2</text><text x="801" y="469">Bf=100</text>
                <text x="526" y="487">C1</text><text x="526" y="509">C=0.33u</text>
                <text x="630" y="513">R13</text><text x="630" y="535">R=5.1k</text>
                <text x="520" y="541">V2</text><text x="520" y="563">U=1</text>
                <text x="730" y="643">Pr2</text>
                <text x="783" y="728">VT3</text><text x="783" y="750">Bf=100</text>
                <text x="789" y="803">R9</text><text x="789" y="825">R=5k</text>
                <text x="652" y="794">V4</text><text x="652" y="816">V=1.3</text>
                <text x="792" y="899">V3</text><text x="792" y="921">V=15</text>
                <text x="1402" y="242">Equation</text><text x="1393" y="275">Eqn1</text><text x="1393" y="297">y=dB(out.v/in.v)</text>
                <text x="1609" y="248">AC1</text><text x="1609" y="270">Type=log</text><text x="1609" y="292">Start=1</text><text x="1609" y="314">Stop=10k</text><text x="1609" y="336">Points=41</text>
              </g>
              <path class="wire" d="M1399 226v23h86"/>
              <path class="wire" d="M1603 130h200v38h-200zM1803 130l4 5v38h-200l-4-5M1803 168l4 5"/>
              <text class="sim-title" x="1609" y="158">ac simulation</text>
              <path id="chart-grid" class="chart-grid"/>
              <path id="chart-ticks" class="chart-frame"/>
              <rect class="chart-frame" x="1308" y="434" width="547" height="312"/>
              <path id="chart-curve" class="chart-curve"/>
              <g class="label end"><text x="1302" y="472">20</text><text x="1302" y="537">10</text><text x="1302" y="602">0</text><text x="1302" y="667">-10</text><text x="1302" y="732">-20</text></g>
              <g class="label mid"><text x="1309" y="764">1</text><text x="1446" y="764">10</text><text x="1582" y="764">100</text><text x="1718" y="764">1e3</text><text x="1855" y="764">1e4</text><text class="axis" x="1582" y="785">frequency</text><text class="axis" transform="translate(1265 590) rotate(-90)">ngspice/2-28:ac.y</text></g>
            </g>
          </svg>
          <div class="scroll scroll-v"><i class="cap">▴</i><b></b><i class="cap">▾</i></div>
          <div class="scroll scroll-h"><i class="cap">◂</i><b></b><i class="cap">▸</i></div>
        </div>
      </section>
    </div>

    <footer class="status"><span class="warn">no warnings</span><span>601 : 684</span></footer>
  </main>
</div>
<script src="schematic.js"></script>
</body>
</html>
```
FILE: styles.css
```css
* { box-sizing: border-box; }
html, body { height: 100%; }
body {
  margin: 0;
  display: flex;
  flex-direction: column;
  background: #f2f1f0;
  color: #4c4c4c;
  font: 20px/24px "DejaVu Sans", sans-serif;
  overflow: hidden;
}
button { font: inherit; color: inherit; padding: 0; border: 0; background: none; }
h1, h2, ul { margin: 0; padding: 0; font-weight: normal; }
svg { display: block; }
.defs { position: absolute; width: 0; height: 0; }

/* top panel */
.panel {
  height: 30px;
  flex: none;
  display: flex;
  align-items: center;
  background: linear-gradient(#5e5b53, #3d3b36);
  color: #dfdbd2;
  font-family: "Noto Sans", sans-serif;
}
.window-buttons { display: flex; gap: 4px; padding-left: 7px; }
.wb { width: 20px; height: 20px; border-radius: 50%; background: linear-gradient(#8b8a84, #65635c); box-shadow: 0 0 0 1px #3a3935; }
.wb-close { background: linear-gradient(#f58460, #e04e20); }
.panel-title { margin-left: 19px; font-size: 18px; font-weight: bold; }
.indicators { display: flex; align-items: center; gap: 16px; margin-left: auto; padding-right: 10px; }
.cpu { width: 94px; height: 30px; margin-right: 12px; }
.ind-20 { width: 20px; height: 20px; }
.ind-mail { width: 22px; height: 16px; }
.ind-vol { width: 25px; height: 20px; }
.lang { width: 26px; height: 26px; border-radius: 2px; background: #dfdbd2; color: #4a4842; font-size: 16px; font-weight: 600; line-height: 27px; text-align: center; }
.clock { font-size: 18px; }

.desktop { flex: 1; min-height: 0; display: flex; }

/* launcher */
.launcher {
  width: 81px;
  flex: none;
  display: flex;
  flex-direction: column;
  gap: 8px;
  padding: 7px 8px 7px 7px;
  background: linear-gradient(#36110b, #47190f 4%, #4d1d11 40%, #5c2912 65%, #6e3510 84%, #7c3f10 90%, #4a1a10 93%, #3a120c);
}
.tile {
  position: relative;
  width: 66px;
  height: 66px;
  flex: none;
  border-radius: 5px;
  border: 1px solid rgba(255, 255, 255, .22);
  background: linear-gradient(rgba(255, 255, 255, .3), rgba(255, 255, 255, .08) 35%, rgba(255, 255, 255, .1));
}
.tile svg { width: 66px; height: 66px; margin: -1px; overflow: visible; }
.tile-dash { background: linear-gradient(#b06a54, #8c3c24 50%, #9a4a30); }
.tile-yandex { background: linear-gradient(#cf7070, #b03a3c 40%, #b84040); }
.tile-light { background: linear-gradient(#cdc6c3, #a39a97); }
.tile-tan { background: linear-gradient(#c0a474, #b08844); }
.tile-trash { margin-top: auto; }
.running::before, .active::after {
  content: "";
  position: absolute;
  top: 27px;
  border: 6px solid transparent;
}
.running::before { left: -8px; border-left-color: #dcd6d2; border-right-width: 0; }
.active::after { right: -8px; border-right-color: #dcd6d2; border-left-width: 0; }
.qucs-word { font: bold 15px "DejaVu Sans", sans-serif; fill: #fff; }

/* toolbar */
.window { flex: 1; min-width: 0; display: flex; flex-direction: column; }
.toolbar { height: 40px; flex: none; display: flex; align-items: center; }
.grip { width: 14px; height: 9px; background: repeating-linear-gradient(#c4c2be 0 1px, transparent 1px 4px) no-repeat 7px 0 / 4px 9px; }
.grip:first-child { width: 10px; background-position: 4px 0; }
.grip-narrow { width: 12px; background-position: 6px 0; }
.tb { width: 36px; height: 34px; display: flex; align-items: center; justify-content: center; }
.tb svg { width: 22px; height: 22px; overflow: visible; }
.tb-on { border: 1px solid #aaa9a5; border-radius: 4px; background: linear-gradient(#e3e2e1, #f0efee); }
.tb-end { width: 1px; height: 34px; margin-left: 5px; background: #dedcd9; }
.icon-name { font: 8px "DejaVu Sans", sans-serif; fill: #000; }
.icon-m1 { font: bold 13px "Liberation Serif", serif; fill: #000; }

/* dock */
.work { flex: 1; min-height: 0; display: flex; }
.dock { width: 362px; flex: none; display: flex; flex-direction: column; }
.dock-title { display: flex; align-items: center; gap: 5px; height: 25px; padding: 0 2px 2px; }
.dock-title h2 { flex: 1; font-size: 20px; }
.dock-btn { width: 12px; height: 12px; }
.dock-body { flex: 1; min-height: 0; display: flex; }
.side-tabs { width: 36px; flex: none; display: flex; flex-direction: column; gap: 1px; align-items: flex-end; }
.side-tab {
  width: 33px;
  writing-mode: vertical-rl;
  transform: rotate(180deg);
  text-align: center;
  border: 1px solid #b9b7b3;
  border-left: 0;
  border-radius: 0 5px 5px 0;
  background: linear-gradient(to left, #f0efee, #d6d4d2);
}
.t-projects, .t-content { height: 95px; }
.t-components { height: 143px; }
.t-libraries { height: 102px; }
.side-tab.selected { width: 35px; background: #f7f7f7; }
.dock-page {
  flex: 1;
  min-width: 0;
  display: flex;
  flex-direction: column;
  gap: 6px;
  padding: 11px 10px;
  border: 1px solid #b5b3af;
  border-radius: 4px;
  background: #f6f6f6;
}
.combo { position: relative; height: 32px; flex: none; }
.combo select {
  width: 100%;
  height: 32px;
  padding: 0 5px;
  appearance: none;
  font: inherit;
  color: #4c4c4c;
  border: 1px solid #b5b3af;
  border-radius: 4px;
  background: linear-gradient(#fff, #e8e7e6);
}
.combo-arrows { position: absolute; right: 6px; top: 12px; width: 6px; height: 12px; }
.parts {
  flex: 1;
  min-height: 0;
  display: grid;
  grid-template-columns: 110px 109px;
  grid-auto-rows: 90px;
  list-style: none;
  border: 1px solid #b9b7b3;
  background: #fff;
  color: #3c3c3c;
}
.parts li { display: flex; flex-direction: column; align-items: center; gap: 3px; white-space: nowrap; padding-top: 1px; }
.parts svg { width: 32px; height: 32px; overflow: visible; }
.k { fill: none; stroke: #000; stroke-width: 1; }
.r1 { fill: none; stroke: #800000; stroke-width: 1; }
.r2 { fill: none; stroke: #800000; stroke-width: 2; }
.r3 { stroke: #800000; stroke-width: 3; }
.pin { stroke: #d02020; stroke-width: 2; }
.search-row { display: flex; gap: 7px; }
.search-row input {
  flex: 1;
  min-width: 0;
  height: 32px;
  padding: 0 4px;
  font: inherit;
  border: 1px solid #b0aeaa;
  border-radius: 4px;
  background: #fff;
}
.search-row input::placeholder { color: #a0a0a0; opacity: 1; }
.clear { width: 83px; height: 32px; border: 1px solid #b5b3af; border-radius: 4px; background: linear-gradient(#fff, #eeedec); }
.splitter { width: 8px; flex: none; display: flex; align-items: center; justify-content: center; }
.splitter span { width: 4px; height: 9px; background: repeating-linear-gradient(#c4c2be 0 1px, transparent 1px 4px); }

/* editor */
.editor { flex: 1; min-width: 0; display: flex; flex-direction: column; }
.doc-tabs { height: 38px; flex: none; display: flex; }
.doc-tab {
  width: 150px;
  display: flex;
  align-items: center;
  justify-content: space-between;
  padding: 0 11px 3px 20px;
  border: 1px solid #b5b3af;
  border-bottom: 0;
  border-radius: 4px 4px 0 0;
  background: #f9f9f9;
}
.doc-tab a { color: inherit; text-decoration: none; }
.doc-tab button, .doc-tab svg { width: 12px; height: 12px; }
.doc-rest { flex: 1; border-bottom: 1px solid #b5b3af; }
.pane {
  flex: 1;
  min-height: 0;
  display: grid;
  grid-template: 1fr 14px / 1fr 14px;
  border: 1px solid #b5b3af;
  border-top: 0;
  border-radius: 0 0 4px 4px;
}
.canvas { width: 100%; height: 100%; min-height: 0; overflow: hidden; background: #fff9e1; border-top: 1px solid #b5b3af; border-left: 1px solid #b5b3af; }
#dots { stroke: #000; stroke-width: 1; }
.scroll { display: flex; border: 1px solid #b5b3af; border-radius: 7px; background: #dddcda; min-width: 0; min-height: 0; }
.scroll-v { flex-direction: column; }
.cap { flex: none; width: 12px; height: 12px; font-size: 8px; line-height: 12px; font-style: normal; text-align: center; color: #777; background: #f4f3f2; border-radius: 6px; }
.scroll b { flex: 1; border: 1px solid #a5a39f; border-radius: 7px; position: relative; }
.scroll-v b { margin: 0 -1px 36px; background: linear-gradient(to right, #fafafa, #dedddc); }
.scroll-h b { margin: -1px 0; background: linear-gradient(#fafafa, #dedddc); }
.scroll b::after { content: ""; position: absolute; left: calc(50% - 3px); top: calc(50% - 4px); width: 6px; height: 9px; background: repeating-linear-gradient(#bbb 0 1px, transparent 1px 4px); }
.scroll-h b::after { left: calc(50% - 4px); top: calc(50% - 3px); width: 9px; height: 5px; background: repeating-linear-gradient(to right, #bbb 0 1px, transparent 1px 4px); }

/* schematic drawing */
.wire { fill: none; stroke: #000080; stroke-width: 2; }
.fat { stroke-width: 3; }
.bars, .pins { stroke: #000080; }
.bars { stroke-width: 3; }
.pins { stroke-width: 4; }
.red-part { fill: none; stroke: #800000; stroke-width: 3; }
.plus-minus { stroke: #222; stroke-width: 2; }
.plus { stroke: #f00; stroke-width: 2; }
.plus.thin { stroke-width: 1; }
.joint { fill: #000080; }
.probe { fill: none; stroke: #8b2f8b; stroke-width: 1; }
.probe .flag { stroke: #c48bbd; stroke-width: 2; }
.label { font-size: 19px; fill: #000; }
.end { text-anchor: end; }
.mid { text-anchor: middle; }
.axis { fill: #00f; }
.sim-title { font-size: 25px; font-weight: bold; fill: #000080; }
.chart-grid { stroke: #c6c4bc; stroke-width: 1; shape-rendering: crispEdges; }
.chart-frame { fill: none; stroke: #33322e; stroke-width: 1; shape-rendering: crispEdges; }
.chart-curve { fill: none; stroke: #1010f0; stroke-width: 1; }

.status { height: 28px; flex: none; margin-top: 1px; display: flex; justify-content: flex-end; align-items: center; gap: 21px; border-top: 1px solid #d4d2cf; padding: 0 1px 1px 0; }
.warn { color: #000; }
```
FILE: schematic.js
```js
// Background grid dots, snapped to whole pixels
const canvas = document.getElementById('schematic');
const step = 18.73;

function drawDots() {
  const { width, height } = canvas.getBoundingClientRect();
  let d = '';
  for (let y = 17; y < height; y += step) {
    for (let x = 4; x < width; x += step) {
      d += `M${Math.round(x)} ${Math.round(y) + 0.5}h1`;
    }
  }
  document.getElementById('dots').setAttribute('d', d);
}
drawDots();
window.addEventListener('resize', drawDots);

// AC diagram: logarithmic frequency axis, gain in dB
const left = 1308, right = 1855, upper = 434, lower = 746, zero = 595.5;
const xOf = f => left + Math.log10(f) * (right - left) / 4;
const yOf = db => zero - db * 6.49;

let grid = '', ticks = '';
for (let decade = 0; decade < 4; decade++) {
  for (let n = 1; n < 10; n++) {
    grid += `M${Math.round(xOf(n * 10 ** decade))} ${upper}V${lower}`;
  }
}
for (let decade = 0; decade <= 4; decade++) {
  ticks += `M${Math.round(xOf(10 ** decade))} ${lower - 5}v10`;
}
for (const db of [-20, -10, 0, 10, 20]) {
  grid += `M${left} ${Math.round(yOf(db))}H${right}`;
  ticks += `M${left - 5} ${Math.round(yOf(db))}h10`;
}
document.getElementById('chart-grid').setAttribute('d', grid);
document.getElementById('chart-ticks').setAttribute('d', ticks);

const points = [];
for (let i = 0; i <= 160; i++) {
  const f = 10 ** (i / 40);
  const db = 20.9 - 10 * Math.log10(1 + (101 / f) ** 2);
  points.push(`${xOf(f).toFixed(1)} ${yOf(db).toFixed(1)}`);
}
document.getElementById('chart-curve').setAttribute('d', 'M' + points.join('L'));
```
